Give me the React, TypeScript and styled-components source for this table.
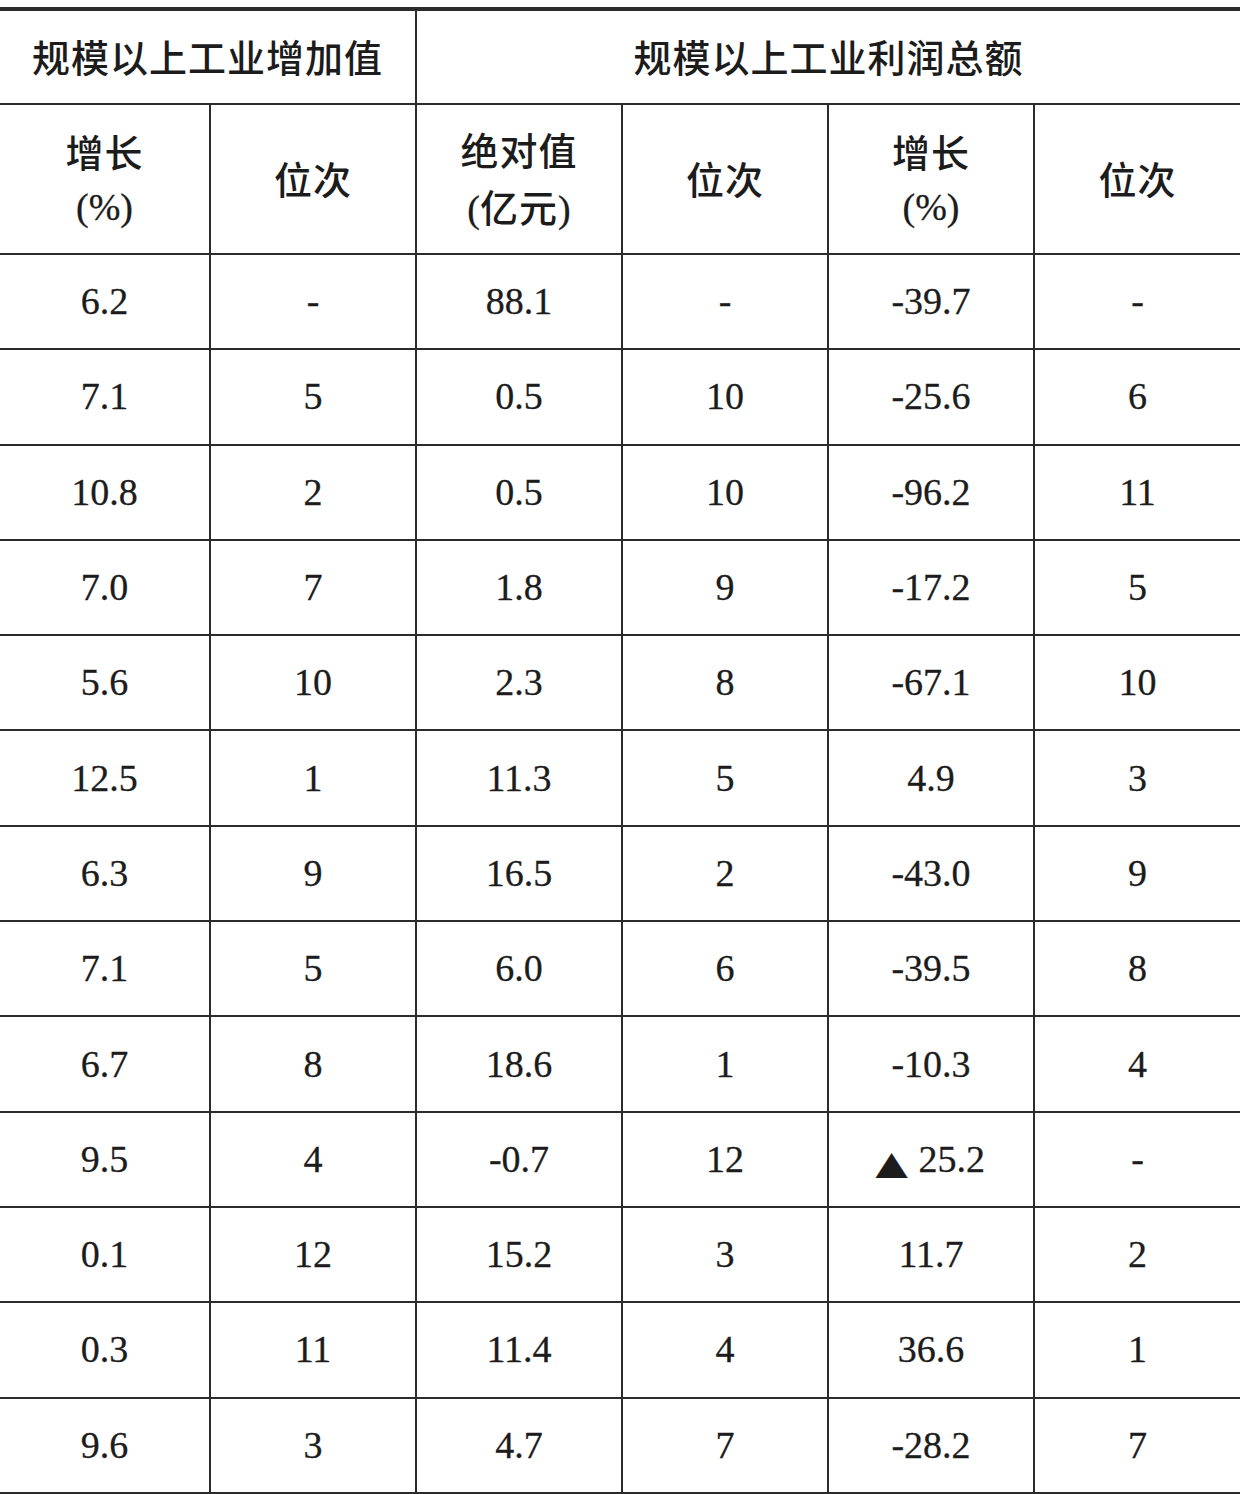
import React from 'react'
import styled, { createGlobalStyle } from 'styled-components'

const GlobalStyle = createGlobalStyle`
  html, body {
    margin: 0;
    padding: 0;
    background: #ffffff;
  }
  body {
    width: 1240px;
    height: 1494px;
    overflow: hidden;
  }
`

const LINE = '#2b2b2b'
const INK = '#1c1c1c'
const SERIF = `'Liberation Serif', 'Times New Roman', 'Noto Sans CJK SC', serif`

const Page = styled.div`
  padding-top: 7px;
  width: 1240px;
`

const Table = styled.table`
  width: 1240px;
  border-collapse: collapse;
  table-layout: fixed;
  border-top: 4px solid ${LINE};
  border-bottom: 3px solid ${LINE};
  font-family: ${SERIF};
  color: ${INK};
`

const Cell = styled.td<{ $height: number }>`
  height: ${(p) => p.$height}px;
  padding: 0;
  text-align: center;
  vertical-align: middle;
  border: 2px solid ${LINE};
  font-family: ${SERIF};
  font-weight: 400;
  font-size: 38px;
  line-height: 53px;
  color: ${INK};
  -webkit-text-stroke: 0.3px ${INK};
  &:first-child {
    border-left: none;
  }
  &:last-child {
    border-right: none;
  }
`

const HeadCell = styled(Cell).attrs({ as: 'th' })``

const Cjk = styled.span`
  font-family: 'Noto Sans CJK SC', sans-serif;
  font-weight: 500;
  letter-spacing: 1px;
  -webkit-text-stroke: 0;
`

const Paren = styled.span`
  display: block;
`

const Mark = styled.span`
  font-family: 'DejaVu Sans', sans-serif;
  font-size: 38px;
  display: inline-block;
  transform: scale(1.1, 0.85);
  transform-origin: center bottom;
  margin-right: 12px;
`

type Row = [string, string, string, string, string, string]

const COLUMN_WIDTHS = [210, 206, 206, 206, 206, 206]

const ROWS: Row[] = [
  ['6.2', '-', '88.1', '-', '-39.7', '-'],
  ['7.1', '5', '0.5', '10', '-25.6', '6'],
  ['10.8', '2', '0.5', '10', '-96.2', '11'],
  ['7.0', '7', '1.8', '9', '-17.2', '5'],
  ['5.6', '10', '2.3', '8', '-67.1', '10'],
  ['12.5', '1', '11.3', '5', '4.9', '3'],
  ['6.3', '9', '16.5', '2', '-43.0', '9'],
  ['7.1', '5', '6.0', '6', '-39.5', '8'],
  ['6.7', '8', '18.6', '1', '-10.3', '4'],
  ['9.5', '4', '-0.7', '12', '▲25.2', '-'],
  ['0.1', '12', '15.2', '3', '11.7', '2'],
  ['0.3', '11', '11.4', '4', '36.6', '1'],
  ['9.6', '3', '4.7', '7', '-28.2', '7'],
]

const renderValue = (value: string) =>
  value.startsWith('▲') ? (
    <>
      <Mark>▲</Mark>
      {value.slice(1)}
    </>
  ) : (
    value
  )

const App = () => (
  <>
    <GlobalStyle />
    <Page>
      <Table>
        <colgroup>
          {COLUMN_WIDTHS.map((w, i) => (
            <col key={i} style={{ width: `${w}px` }} />
          ))}
        </colgroup>
        <thead>
          <tr>
            <HeadCell $height={92} colSpan={2}>
              <Cjk>规模以上工业增加值</Cjk>
            </HeadCell>
            <HeadCell $height={92} colSpan={4}>
              <Cjk>规模以上工业利润总额</Cjk>
            </HeadCell>
          </tr>
          <tr>
            <HeadCell $height={148}>
              <Cjk>增长</Cjk>
              <Paren>(%)</Paren>
            </HeadCell>
            <HeadCell $height={148}>
              <Cjk>位次</Cjk>
            </HeadCell>
            <HeadCell $height={148}>
              <Cjk>绝对值</Cjk>
              <Paren>
                (<Cjk>亿元</Cjk>)
              </Paren>
            </HeadCell>
            <HeadCell $height={148}>
              <Cjk>位次</Cjk>
            </HeadCell>
            <HeadCell $height={148}>
              <Cjk>增长</Cjk>
              <Paren>(%)</Paren>
            </HeadCell>
            <HeadCell $height={148}>
              <Cjk>位次</Cjk>
            </HeadCell>
          </tr>
        </thead>
        <tbody>
          {ROWS.map((row, r) => (
            <tr key={r}>
              {row.map((value, c) => (
                <Cell key={c} $height={93.3}>
                  {renderValue(value)}
                </Cell>
              ))}
            </tr>
          ))}
        </tbody>
      </Table>
    </Page>
  </>
)

export default App
